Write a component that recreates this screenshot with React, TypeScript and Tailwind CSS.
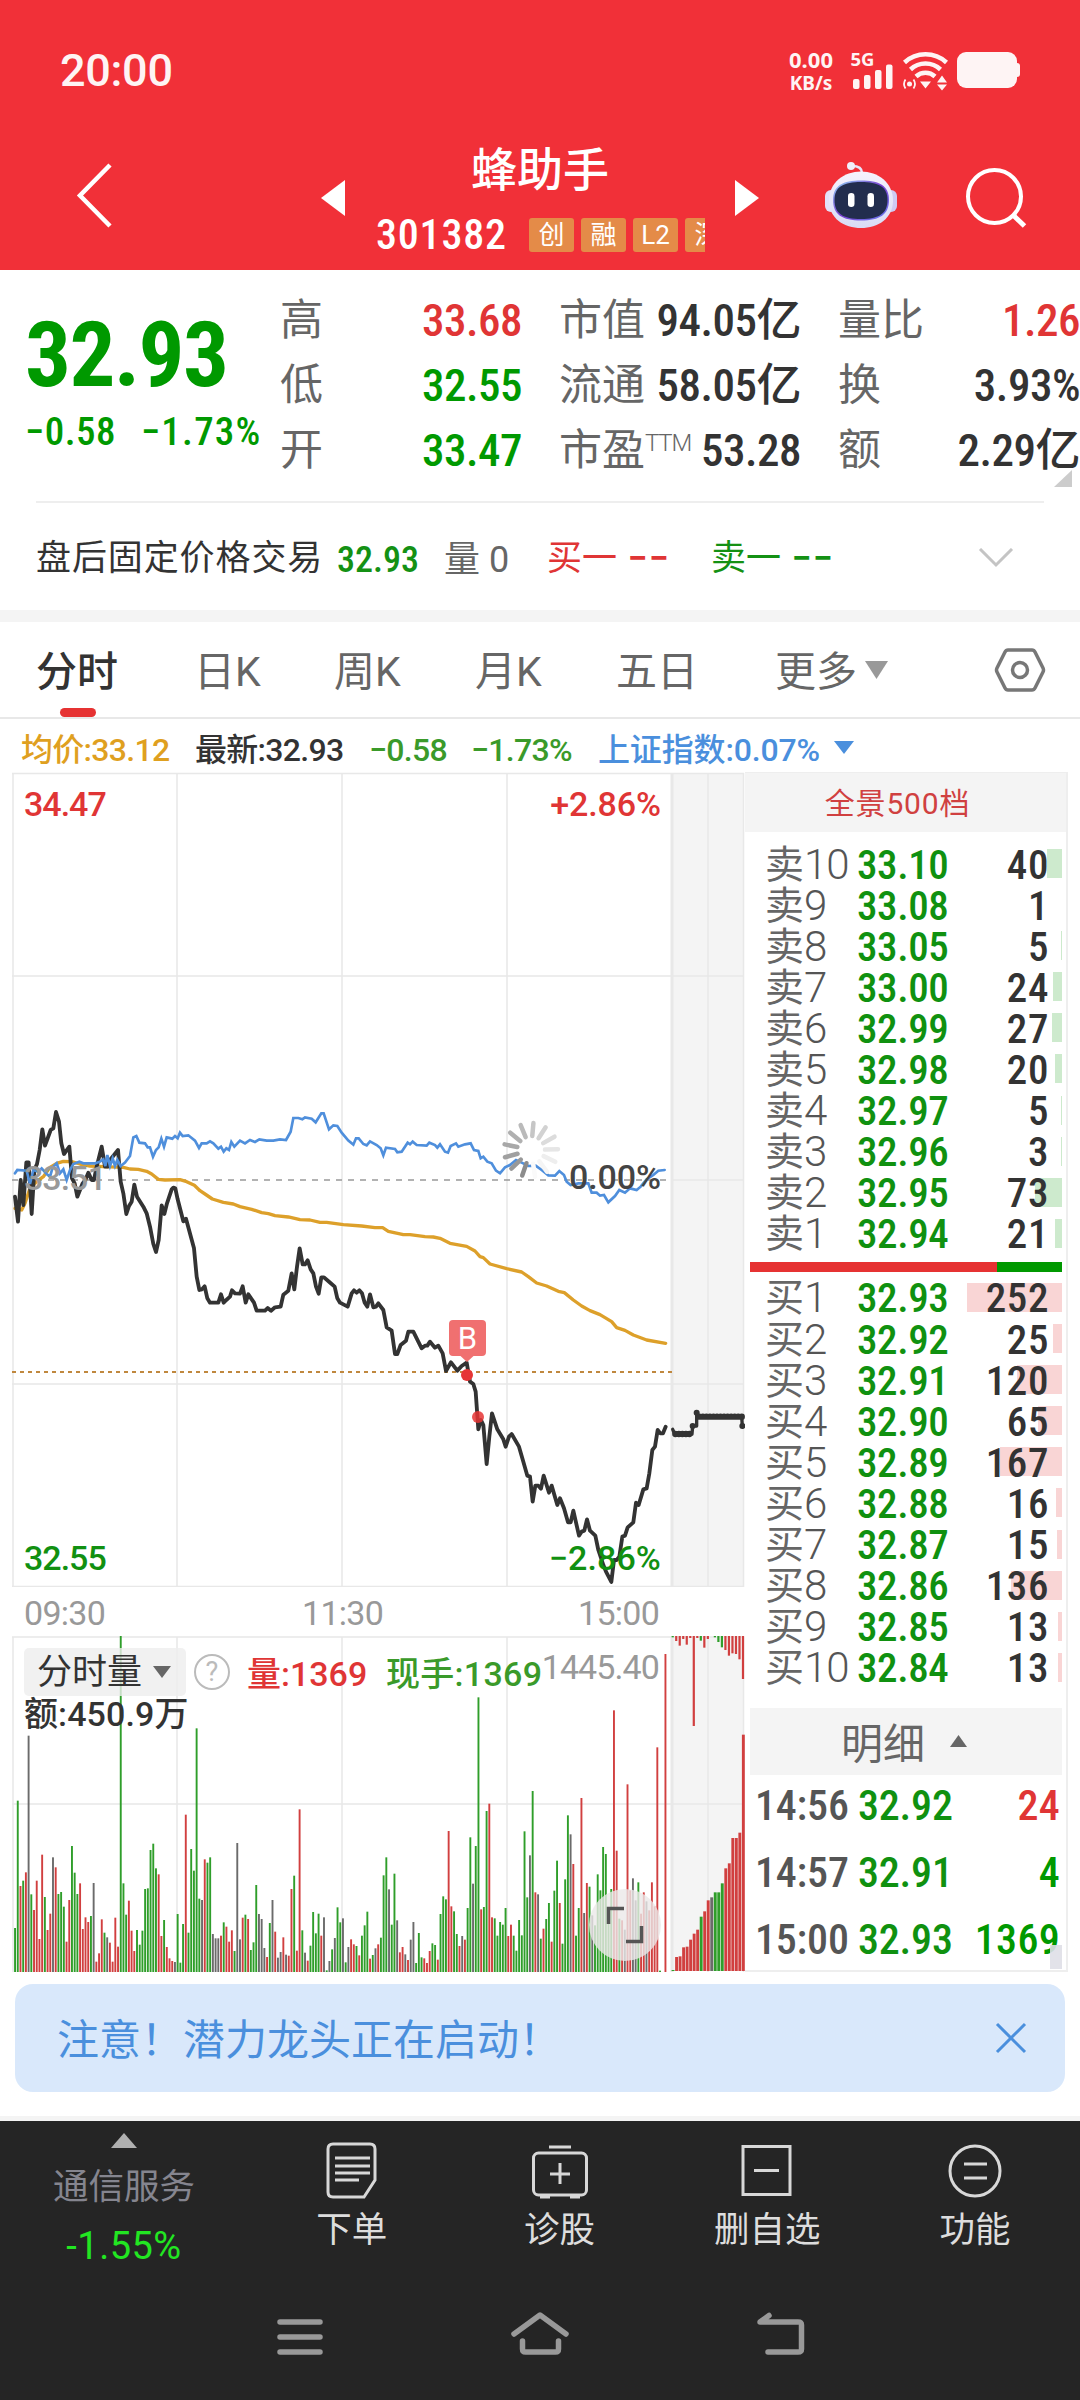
import React from "react";

type Level = { side: string; depth: number; price: string; qty: number };

const asks: Level[] = [
    { side: "卖", depth: 10, price: "33.10", qty: 40 },
    { side: "卖", depth: 9, price: "33.08", qty: 1 },
    { side: "卖", depth: 8, price: "33.05", qty: 5 },
    { side: "卖", depth: 7, price: "33.00", qty: 24 },
    { side: "卖", depth: 6, price: "32.99", qty: 27 },
    { side: "卖", depth: 5, price: "32.98", qty: 20 },
    { side: "卖", depth: 4, price: "32.97", qty: 5 },
    { side: "卖", depth: 3, price: "32.96", qty: 3 },
    { side: "卖", depth: 2, price: "32.95", qty: 73 },
    { side: "卖", depth: 1, price: "32.94", qty: 21 },
];

const bids: Level[] = [
    { side: "买", depth: 1, price: "32.93", qty: 252 },
    { side: "买", depth: 2, price: "32.92", qty: 25 },
    { side: "买", depth: 3, price: "32.91", qty: 120 },
    { side: "买", depth: 4, price: "32.90", qty: 65 },
    { side: "买", depth: 5, price: "32.89", qty: 167 },
    { side: "买", depth: 6, price: "32.88", qty: 16 },
    { side: "买", depth: 7, price: "32.87", qty: 15 },
    { side: "买", depth: 8, price: "32.86", qty: 136 },
    { side: "买", depth: 9, price: "32.85", qty: 13 },
    { side: "买", depth: 10, price: "32.84", qty: 13 },
];

const trades = [
    { time: "14:56", price: "32.92", qty: "24", color: "text-[#e03535]" },
    { time: "14:57", price: "32.91", qty: "4", color: "text-[#009900]" },
    { time: "15:00", price: "32.93", qty: "1369", color: "text-[#009900]" },
];

// Line charts are drawn on a grid of a third of a pixel
const priceLine =
    "45,350 54,425 62,300 70,375 79,247 86,247 95,402 103,270 111,252 119,210 127,148 135,197 152,150 160,145 168,96 177,125 184,190 192,222 208,200 216,295 224,310 232,350 248,310 256,300 265,278 275,300 282,300 290,260 305,200 315,260 322,260 330,240 354,210 362,305 370,340 379,402 387,378 395,365 403,314 411,350 430,380 440,400 450,440 460,492 468,516 476,480 485,376 493,402 501,370 515,328 520,323 526,325 533,358 550,424 558,416 582,505 590,590 598,630 606,628 614,619 622,655 630,668 655,668 663,643 671,668 679,660 690,650 696,631 705,640 720,641 728,619 737,668 745,643 762,668 770,692 795,692 803,684 813,692 825,682 842,680 850,644 865,632 875,580 883,628 891,560 899,505 908,553 915,553 923,541 932,568 940,580 948,620 956,641 964,592 972,592 988,606 1004,620 1012,655 1020,668 1043,680 1055,640 1062,631 1070,638 1078,631 1086,640 1094,668 1102,680 1110,643 1120,682 1128,680 1135,670 1150,690 1160,742 1175,752 1185,822 1192,822 1202,795 1218,782 1225,755 1240,755 1250,775 1265,805 1275,797 1282,797 1290,785 1305,803 1315,797 1328,820 1338,873 1353,847 1372,872 1385,858 1400,848 1410,905 1420,912 1427,935 1435,1048 1443,1020 1450,1035 1460,1152 1468,1070 1476,1000 1492,1048 1510,1078 1517,1100 1527,1070 1535,1062 1557,1100 1570,1145 1582,1187 1590,1190 1598,1265 1606,1217 1615,1217 1623,1226 1631,1187 1647,1238 1655,1217 1672,1275 1680,1255 1692,1285 1704,1327 1712,1327 1720,1292 1737,1367 1745,1355 1753,1352 1761,1318 1770,1352 1786,1367 1795,1410 1810,1455 1818,1475 1834,1506 1842,1440 1850,1440 1858,1430 1867,1370 1875,1367 1883,1342 1900,1327 1908,1268 1916,1275 1930,1228 1940,1225 1948,1180 1957,1110 1965,1100 1973,1050 1981,1060 1989,1060 1997,1040";

const averageLine =
    "45,385 65,390 75,370 90,325 110,305 130,290 150,262 170,250 190,244 215,245 240,252 270,258 310,260 370,262 390,267 415,268 440,274 455,282 475,298 495,300 540,299 560,305 583,316 600,332 615,342 637,357 670,367 700,372 720,380 755,388 785,398 805,401 825,407 865,411 900,419 930,420 960,427 980,427 1030,434 1085,438 1125,443 1148,443 1165,454 1210,464 1230,464 1275,470 1300,471 1320,475 1350,490 1400,499 1425,513 1440,530 1450,533 1470,552 1520,566 1565,576 1585,590 1610,609 1640,618 1675,634 1693,638 1720,660 1745,678 1770,692 1800,704 1835,725 1850,743 1875,751 1900,765 1940,780 1997,790";

const indexLine =
    "45,280 52,270 80,272 90,312 100,270 115,275 125,265 140,282 150,290 158,262 170,250 180,280 190,268 200,300 210,270 220,252 238,245 250,250 285,250 300,245 310,238 316,258 322,225 330,258 338,235 345,258 352,240 362,258 375,248 390,228 400,172 409,168 418,188 435,190 443,202 450,202 459,230 468,210 476,202 484,176 492,200 500,172 517,176 525,168 533,175 540,158 548,168 565,166 585,182 597,204 605,190 620,190 630,184 640,190 655,206 663,200 671,215 679,205 687,210 694,186 703,200 720,182 735,190 750,180 765,186 778,178 800,182 820,182 840,178 858,180 872,155 880,114 895,114 907,118 915,112 935,116 947,127 964,100 971,100 987,148 1000,136 1012,138 1025,158 1045,182 1060,194 1068,175 1076,175 1090,192 1100,196 1110,184 1130,195 1142,205 1150,226 1158,203 1185,207 1192,217 1205,215 1223,188 1230,193 1238,185 1250,195 1280,197 1288,188 1305,195 1312,203 1320,193 1335,215 1344,218 1352,198 1368,190 1375,200 1395,193 1412,190 1422,210 1435,213 1442,235 1450,230 1462,245 1475,250 1488,272 1500,280 1515,262 1530,255 1548,240 1565,248 1585,258 1607,257 1625,270 1645,286 1665,287 1678,273 1692,285 1700,305 1712,315 1735,310 1765,310 1775,338 1790,338 1800,347 1812,345 1825,367 1845,348 1858,330 1875,338 1890,325 1910,330 1922,320 1940,298 1960,285 1975,272 1994,270";

// One bar a minute: colour letter, then height in thirds of a pixel
const volumes =
    "g132 g514 r258 g274 r299 k709 g233 r186 r274 r99 r352 g225 r126 r175 k344 r314 g234 g240 g196 r91 r216 g378 g298 g234 r266 r129 r164 r150 g168 k267 r31 r56 r158 g118 k104 r88 r31 r163 r76 g1008 g266 g172 r214 r124 r63 g126 g82 g124 g249 g251 g366 g385 g311 r293 r108 g156 r75 r41 r33 k30 g174 g28 g144 r472 g118 g369 g304 g731 g220 k216 r338 g328 g344 k114 k101 k101 r109 g149 r136 r91 r125 g63 k387 k98 r163 g172 r159 g66 g89 g261 k174 k159 k72 r45 g147 k216 r121 k43 k60 r104 k52 r49 r249 g289 r64 r488 g125 k58 r34 g79 g180 g116 g175 r109 k164 g5 k33 g68 k102 g194 g149 k161 g29 k75 r98 r83 g78 r50 g109 g140 g181 r40 g51 k71 r83 g103 g290 g344 k248 g142 g295 k155 r59 r75 k53 r36 k97 k150 g27 g117 g44 r41 r27 r63 g86 g81 r37 g174 g227 g218 r423 r197 g182 g114 r78 k108 r97 g192 g404 k265 g378 g824 r188 g195 g483 r505 r164 g161 g109 g150 g142 g192 r108 r142 g109 g64 g156 g110 g422 g224 k350 g543 r239 k233 g100 r130 g159 g207 r91 g244 g334 r207 g85 g278 g470 k413 r324 g109 g192 r522 k177 r267 g256 k170 g140 g293 g245 g375 g354 g175 g249 r785 r364 g160 r155 k127 r563 r245 k281 k215 g269 r175 r239 k212 r185 r269 r197 r674 g4 g0 r954".split(" ");

const closingBars =
    "g3 r42 r44 r71 r73 r94 r112 r124 g163 r179 r212 k221 g236 g236 g263 r308 r323 r399 r399 r415 r709".split(" ");

const unmatchedBars =
    "g4 r15 r29 r9 r26 r6 r270 r6 g14 r35 r9 k0 g4 g18 g34 r42 r59 r52 r54 r70 r129".split(" ");

const barColor: Record<string, string> = { g: "#2f9e2a", r: "#d13f3f", k: "#6b6b6b" };

const spokes = ["#8c8c8c", "#989898", "#a0a0a0", "#a8a8a8", "#b0b0b0", "#bababa", "#c6c6c6", "#d2d2d2", "#dcdcdc", "#e6e6e6", "#eeeeee", "#f5f5f5", "#fafafa"];

const Triangle = ({ className, points }: { className: string; points: string }) => (
    <svg viewBox="0 0 10 10" preserveAspectRatio="none" className={className} fill="currentColor">
        <polygon points={points} />
    </svg>
);

function StatusBar() {
    return (
        <div className="flex h-[142px] items-center pl-[60px] pr-[60px] text-white">
            <span className="flex-1 text-[45px] font-medium tracking-[-0.300px] opacity-95">20:00</span>
            <div className="flex items-center opacity-95">
                <div className="mr-[14px] w-[50px] text-center font-['Noto_Sans'] text-[22px] font-bold leading-[24px]">
                    <p>0.00</p>
                    <p className="text-[19px]">KB/s</p>
                </div>
                <svg width="170" height="42" viewBox="850 51 170 42" className="overflow-visible" fill="#fff">
                    <text x="850.500" y="67" fontSize="18.500" fontWeight="700" fontFamily="Noto Sans">5G</text>
                    <rect x="853" y="80" width="6.500" height="10" rx="2" />
                    <rect x="864" y="76" width="6.500" height="14" rx="2" />
                    <rect x="875" y="71" width="6.500" height="19" rx="2" />
                    <rect x="886" y="65.500" width="6.500" height="24.500" rx="2" />
                    <g fill="none" stroke="#fff" strokeWidth="4.500">
                        <path d="M904.500 63.500a31 31 0 0 1 42 0" />
                        <path d="M910.500 70.500a22 22 0 0 1 30 0" />
                        <path d="M916 77.500a14 14 0 0 1 19 0" />
                        <path strokeWidth="1.800" d="M905.500 80.500q-3 4.500 0 9M913.500 80.500q3 4.500 0 9" />
                    </g>
                    <circle cx="909.500" cy="85" r="2.500" />
                    <path d="M920 82.500h11l-5.500 7zM937 83.500l5-7 5 7zM937 85.500l5 6 5-6z" />
                    <rect x="957" y="53" width="60" height="36" rx="9" />
                    <path d="M1017 64q3 0 3 3v8q0 3-3 3z" />
                </svg>
            </div>
        </div>
    );
}

function Robot() {
    return (
        <svg width="72" height="68" viewBox="825 161 72 68">
            <defs>
                <linearGradient id="rim" x1="0" y1="0" x2="1" y2="1">
                    <stop offset="0" stopColor="#8fd4f5" />
                    <stop offset="0.500" stopColor="#7a3fd0" />
                    <stop offset="1" stopColor="#6a7ff0" />
                </linearGradient>
                <linearGradient id="shell" x1="0" y1="0" x2="0" y2="1">
                    <stop offset="0" stopColor="#f6f3fd" />
                    <stop offset="1" stopColor="#d9dbf5" />
                </linearGradient>
            </defs>
            <path d="M862 173q0-7-10-7" fill="none" stroke="#e8e6fa" strokeWidth="2.500" />
            <circle cx="851" cy="166" r="4" fill="#f1effb" />
            <rect x="825" y="190" width="12" height="22" rx="6" fill="#e3e0f8" />
            <rect x="885" y="190" width="12" height="22" rx="6" fill="#cfcaf3" />
            <path d="M861 171.500c17 0 32 11 32 29s-15 27.500-32 27.500-32-9.500-32-27.500 15-29 32-29z" fill="url(#shell)" />
            <path d="M861 180.500c18 0 28 5 28 19.500s-9 20.500-28 20.500-28-6-28-20.500 10-19.500 28-19.500z" fill="url(#rim)" />
            <path d="M861 182c17 0 26.500 4.500 26.500 18s-8.500 19-26.500 19-26.500-5.500-26.500-19 9.500-18 26.500-18z" fill="#222d4e" />
            <rect x="848" y="193" width="6.500" height="14" rx="3.200" fill="#fff" />
            <rect x="867.500" y="193" width="6.500" height="14" rx="3.200" fill="#fff" />
        </svg>
    );
}

function TitleBar() {
    return (
        <div className="flex h-[128px] items-start text-white">
            <svg width="40" height="70" viewBox="0 0 40 70" className="ml-[74px] mt-[18px]" fill="none" stroke="currentColor" strokeWidth="4.5">
                <path d="M36 5L6 35.500 36 66" />
            </svg>
            <Triangle className="ml-[207px] mt-[38px] h-[36px] w-[24px]" points="0,5 10,0 10,10" />
            <div className="ml-[31px] flex w-[329px] flex-col">
                <h1 className="pr-[1px] text-center text-[46px] font-medium leading-[56px]">蜂助手</h1>
                <div className="mt-[11px] flex h-[52px] items-center gap-[7px] overflow-hidden">
                    <span className="w-[146px] shrink-0 text-[42px] font-medium leading-[50px] tracking-[0.800px] [font-stretch:75%]">301382</span>
                    {["创", "融", "L2", "深"].map((tag) => (
                        <span key={tag} className="flex h-[34px] w-[45px] shrink-0 items-center justify-center rounded-[3px] bg-[#e48b48] text-[26px] leading-none">
                            {tag}
                        </span>
                    ))}
                </div>
            </div>
            <Triangle className="ml-[30px] mt-[38px] h-[36px] w-[24px]" points="0,0 10,5 0,10" />
            <div className="ml-[66px] mt-[19px]">
                <Robot />
            </div>
            <svg width="66" height="66" viewBox="962 164 66 66" className="ml-[65px] mt-[22px]" fill="none" stroke="currentColor" strokeWidth="4">
                <circle cx="994.500" cy="196.500" r="26.500" />
                <path d="M1013 215l11.500 11" strokeWidth="5" />
            </svg>
        </div>
    );
}

function Stat({ label, sup, value, color = "text-[#333]" }: { label: string; sup?: string; value: string; color?: string }) {
    return (
        <div className="flex h-[65px] items-center justify-between whitespace-nowrap text-[43px]">
            <span className="flex text-[#666]">
                {label}
                {sup && <sup className="top-0 text-[24px] font-light leading-[50px] tracking-[-1.200px]">{sup}</sup>}
            </span>
            <span className={`text-[45px] font-medium tracking-[-0.500px] [font-stretch:75%] ${color}`}>{value}</span>
        </div>
    );
}

function Quote() {
    return (
        <section className="relative h-[231px]">
            <div className="flex pt-[18px]">
                <div className="w-[280px] pl-[25px] text-[#009900]">
                    <p className="mt-[17px] text-[91px] font-bold leading-[101px] tracking-[-1.600px] [font-stretch:75%]">32.93</p>
                    <p className="mt-[4px] flex gap-[25px] text-[39px] font-medium leading-[44px] tracking-[0.500px] [font-stretch:75%]">
                        <span>−0.58</span>
                        <span className="tracking-[1.200px]">−1.73%</span>
                    </p>
                </div>
                <div className="w-[242px]">
                    <Stat label="高" value="33.68" color="text-[#e03535]" />
                    <Stat label="低" value="32.55" color="text-[#009900]" />
                    <Stat label="开" value="33.47" color="text-[#009900]" />
                </div>
                <div className="ml-[37px] w-[242px]">
                    <Stat label="市值" value="94.05亿" />
                    <Stat label="流通" value="58.05亿" />
                    <Stat label="市盈" sup="TTM" value="53.28" />
                </div>
                <div className="ml-[37px] w-[242px]">
                    <Stat label="量比" value="1.26" color="text-[#e03535]" />
                    <Stat label="换" value="3.93%" />
                    <Stat label="额" value="2.29亿" />
                </div>
            </div>
            <Triangle className="absolute left-[1054px] top-[200px] h-[17px] w-[18px] text-[#ccc]" points="10,0 10,10 0,10" />
        </section>
    );
}

function AfterHours() {
    return (
        <section className="mx-[36px] flex h-[109px] items-center border-t-2 border-[#eee] pt-[6px] text-[35px]">
            <span className="w-[301px] tracking-[0.900px] text-[#333]">盘后固定价格交易</span>
            <span className="w-[107px] text-[36px] font-medium text-[#149114] [font-stretch:75%]">32.93</span>
            <span className="w-[103px] text-[36px] text-[#666]">量 0</span>
            <span className="flex w-[164px] gap-[11px] text-[#e03535]">买一 <b className="tracking-[1.800px]">−−</b></span>
            <span className="flex flex-1 gap-[11px] text-[#149114]">卖一 <b className="tracking-[1.800px]">−−</b></span>
            <svg width="36" height="20" viewBox="0 0 36 20" className="mb-[3px] mr-[30px]" fill="none" stroke="#c4c4c4" strokeWidth="3">
                <path d="M2 1l16 16L34 1" />
            </svg>
        </section>
    );
}

function Tabs() {
    return (
        <nav className="flex h-[97px] items-center border-b-2 border-[#e8e8e8] text-[41px] text-[#666]">
            <div className="relative ml-[36px] flex h-full w-[158px] items-center pt-[6px] font-medium text-[#333]">
                分时
                <span className="absolute bottom-0 left-[24px] h-[9px] w-[36px] rounded-full bg-[#e63232]" />
            </div>
            <span className="w-[140px] pt-[6px]">日K</span>
            <span className="w-[141px] pt-[6px]">周K</span>
            <span className="w-[141px] pt-[6px]">月K</span>
            <span className="w-[159px] pt-[6px]">五日</span>
            <span className="w-[90px] pt-[6px]">更多</span>
            <Triangle className="h-[18px] w-[23px] text-[#999]" points="0,0 10,0 5,10" />
            <svg width="52" height="48" viewBox="0 0 52 48" className="ml-[106px]" fill="none" stroke="#777" strokeWidth="3.5" strokeLinejoin="round">
                <path d="M14 4h24q2 0 3 2l8 16q1 2 0 4l-8 16q-1 2-3 2H14q-2 0-3-2L3 26q-1-2 0-4l8-16q1-2 3-2z" />
                <circle cx="26" cy="24" r="7.500" />
            </svg>
        </nav>
    );
}

function Legend() {
    return (
        <div className="flex h-[53px] items-center whitespace-nowrap pt-[8px] text-[32px] font-medium tracking-[-0.700px]">
            <span className="ml-[21px] w-[174px] text-[#dfa01f]">均价:33.12</span>
            <span className="w-[174px] text-[#333]">最新:32.93</span>
            <span className="w-[102px] text-[#3a9a2a]">−0.58</span>
            <span className="w-[127px] text-[#3a9a2a]">−1.73%</span>
            <span className="w-[236px] tracking-[-0.150px] text-[#4a8fdd]">上证指数:0.07%</span>
            <Triangle className="mb-[4px] h-[13px] w-[20px] text-[#4a8fdd]" points="0,0 10,0 5,10" />
        </div>
    );
}

// Loading wheel, darkest spoke near the bottom and fading clockwise
function Spinner() {
    return (
        <g strokeWidth="4.500" strokeLinecap="round">
            {spokes.map((shade, i) => {
                const a = (109 + (i * 360) / 13) * (Math.PI / 180);
                return (
                    <line key={i} stroke={shade} x1={531 + 14 * Math.cos(a)} y1={1150 + 14 * Math.sin(a)} x2={531 + 27 * Math.cos(a)} y2={1150 + 27 * Math.sin(a)} />
                );
            })}
        </g>
    );
}

function PriceChart() {
    const label = "absolute text-[34px] font-medium leading-[34px]";
    return (
        <div className="relative h-[815px]">
            <svg width="745" height="815" viewBox="0 772 745 815" className="block">
                <rect x="671" y="773" width="73" height="813" fill="#f4f4f4" />
                <g stroke="#e8e8e8" strokeWidth="1.500" fill="none">
                    <path d="M13 773V1587M177 773V1587M342 773V1587M507 773V1587M708 773V1587M743.500 773V1587" />
                    <path d="M12 773.500H744M12 976H744M672 1180H744M12 1384H744M12 1586.500H744" />
                    <path d="M672 773V1587" strokeWidth="3" />
                </g>
                <path d="M12 1180H666" stroke="#999" strokeWidth="1.500" strokeDasharray="6 6" />
                <path d="M12 1372H672" stroke="#c0883e" strokeWidth="2" strokeDasharray="4 4" />
                <g transform="translate(0 1080) scale(0.33333)" fill="none" strokeLinejoin="round" strokeLinecap="round">
                    <polyline points={averageLine} stroke="#dda02a" strokeWidth="10" />
                    <polyline points={priceLine} stroke="#333" strokeWidth="11.500" />
                    <polyline points={indexLine} stroke="#4f8fdc" strokeWidth="8" strokeLinejoin="miter" />
                    <polyline points="2018,1048 2024,1062 2076,1062 2078,1038 2090,1038 2090,998 2096,1010 2225,1010 2227,1038" stroke="#333" strokeWidth="10" />
                    <path d="M2026 1062H2078M2098 1010H2228" stroke="#333" strokeWidth="19" strokeDasharray="0.100 10.500" />
                    <path d="M2078 1038h.1M2090 998h.1M2227 1038h.1" stroke="#333" strokeWidth="18" />
                </g>
                <Spinner />
                <path d="M453 1320h29q4 0 4 4v28q0 4-4 4h-8.500l-6.500 6-6.500-6H453q-4 0-4-4v-28q0-4 4-4z" fill="#f07070" />
                <text x="467.500" y="1349" fontSize="31" fill="#fff" textAnchor="middle">B</text>
                <circle cx="467" cy="1375" r="6" fill="#e63535" />
                <circle cx="478" cy="1417" r="6" fill="#e63535" fillOpacity="0.850" />
            </svg>
            <span className={`${label} left-[24px] top-[15px] tracking-[-1px] text-[#e03535]`}>34.47</span>
            <span className={`${label} right-[84px] top-[15px] tracking-[-0.100px] text-[#e03535]`}>+2.86%</span>
            <span className={`${label} left-[24px] top-[389px] tracking-[-1px] text-[#999]`}>33.51</span>
            <span className={`${label} right-[84px] top-[388px] tracking-[-0.100px] text-[#444]`}>0.00%</span>
            <span className={`${label} left-[24px] top-[769px] tracking-[-1px] text-[#119011]`}>32.55</span>
            <span className={`${label} right-[84px] top-[769px] tracking-[0.100px] text-[#119011]`}>−2.86%</span>
        </div>
    );
}

function VolumeChart() {
    return (
        <div className="relative h-[336px]">
            <svg width="745" height="336" viewBox="0 1636 745 336" className="block">
                <rect x="671" y="1637" width="73" height="334" fill="#f4f4f4" />
                <g stroke="#e8e8e8" strokeWidth="1.500" fill="none">
                    <path d="M13 1637V1972M177 1637V1972M342 1637V1972M507 1637V1972M708 1637V1972M743.500 1637V1972" />
                    <path d="M12 1637H744M12 1804H744" />
                    <path d="M672 1637V1972" strokeWidth="3" />
                </g>
                {volumes.map((v, i) => {
                    const h = Number(v.slice(1)) / 3;
                    return <rect key={i} x={14.1 + i * 2.71} y={1972 - h} width="1.900" height={h} fill={barColor[v[0]]} />;
                })}
                {closingBars.map((v, i) => {
                    const h = Number(v.slice(1)) / 3;
                    return <rect key={i} x={671.6 + i * 3.515} y={1971 - h} width="2.900" height={h} fill={barColor[v[0]]} />;
                })}
                {unmatchedBars.map((v, i) => (
                    <rect key={i} x={671.6 + i * 3.515} y={1636} width="2.200" height={Number(v.slice(1)) / 3} fill={barColor[v[0]]} />
                ))}
                <circle cx="625" cy="1925" r="36" fill="#ebe8e8" fillOpacity="0.800" />
                <path d="M608.500 1924V1908.500H624M626 1941.500H641.500V1926" fill="none" stroke="#555" strokeWidth="3.500" />
            </svg>
            <div className="absolute left-[24px] top-[12px] flex h-[48px] w-[162px] items-center rounded-[5px] bg-[#eeeeee]/80 pl-[13px] pt-[3px] text-[35px] text-[#333]">
                分时量
                <Triangle className="mb-[3px] ml-[11px] h-[12px] w-[18px] text-[#666]" points="0,0 10,0 5,10" />
            </div>
            <div className="absolute left-[194px] top-[18px] flex size-[36px] items-center justify-center rounded-full border-2 border-[#bbb] text-[27px] leading-none text-[#bbb]">?</div>
            <span className="absolute left-[247px] top-[20px] text-[34px] font-medium leading-[36px] text-[#e03535]">量:1369</span>
            <span className="absolute left-[386px] top-[20px] text-[34px] font-medium leading-[36px] tracking-[0.300px] text-[#3a9a2a]">现手:1369</span>
            <span className="absolute right-[86px] top-[13px] text-[34px] leading-[36px] tracking-[-0.900px] text-[#999]">1445.40</span>
            <span className="absolute left-[24px] top-[60px] text-[34px] font-medium leading-[36px] tracking-[0.100px] text-[#333]">额:450.9万</span>
        </div>
    );
}

function LevelRow({ level, barClass }: { level: Level; barClass: string }) {
    return (
        <div className="relative flex h-[41.1px] items-center pl-[20px] pr-[17px] font-medium leading-[38px]">
            <div className={`absolute right-[4px] top-[5px] h-[29px] ${barClass}`} style={{ width: Math.floor(level.qty * 0.377) }} />
            <span className="relative flex w-[92px] whitespace-nowrap text-[39px] font-normal text-[#666]">
                {level.side}
                <span className="text-[42px] font-light tracking-[-1px] text-[#555]">{level.depth}</span>
            </span>
            <span className="relative flex-1 text-[41px] tracking-[-0.400px] text-[#109110] [font-stretch:75%]">{level.price}</span>
            <span className="relative text-[41px] tracking-[0.600px] text-[#333] [font-stretch:75%]">{level.qty}</span>
        </div>
    );
}

function OrderBook() {
    return (
        <aside className="flex h-[1200px] w-[323px] flex-col border-b-2 border-r-2 border-[#eee]">
            <div className="flex h-[60px] shrink-0 items-center justify-center border-t border-[#eee] bg-[#f4f4f4] pr-[16px] pt-[2px] text-[30px] tracking-[0.800px] text-[#d04040]">全景500档</div>
            <div className="pt-[12px]">
                {asks.map((level) => (
                    <LevelRow key={level.depth} level={level} barClass="bg-[#cdeacd]" />
                ))}
            </div>
            <div className="mb-[6px] ml-[5px] mr-[4px] mt-[7px] flex h-[10px] shrink-0 bg-[#e63232]">
                <div className="ml-auto w-[65px] bg-[#009900]" />
            </div>
            <div>
                {bids.map((level) => (
                    <LevelRow key={level.depth} level={level} barClass="bg-[#f9d5d5]" />
                ))}
            </div>
            <div className="ml-[5px] mr-[4px] mt-[19px] flex h-[67px] shrink-0 items-center bg-[#f4f4f4] pl-[91px] pt-[6px] text-[42px] text-[#666]">
                明细
                <Triangle className="mb-[6px] ml-[25px] h-[12px] w-[17px]" points="5,0 10,10 0,10" />
            </div>
            <div className="relative mt-[-4px] text-[42px] font-medium tracking-[-0.200px] text-[#109110] [font-stretch:75%]">
                {trades.map((trade) => (
                    <div key={trade.time} className="flex h-[67px] items-center pl-[10px] pr-[6px] pt-[2px]">
                        <span className="w-[103px] text-[#555]">{trade.time}</span>
                        <span className="flex-1">{trade.price}</span>
                        <span className={`tracking-[0.300px] ${trade.color}`}>{trade.qty}</span>
                    </div>
                ))}
                <span className="absolute right-[4px] top-[174px] h-[24px] w-[12px] bg-[#dfdfe7]/90" />
            </div>
        </aside>
    );
}

function Charts() {
    return (
        <div className="flex h-[1200px]">
            <div className="w-[745px]">
                <PriceChart />
                <div className="flex h-[49px] items-center pl-[24px] pt-[4px] text-[34px] tracking-[-0.700px] text-[#999]">
                    <span className="w-[278px]">09:30</span>
                    <span className="w-[276px]">11:30</span>
                    <span>15:00</span>
                </div>
                <VolumeChart />
            </div>
            <OrderBook />
        </div>
    );
}

function Banner() {
    return (
        <div className="mx-[15px] mt-[12px] flex h-[108px] items-center justify-between rounded-[18px] bg-[#d9e8fb] pl-[42px] pr-[38px] text-[42px] text-[#4a8fdd]">
            <span className="pt-[4px]">注意！潜力龙头正在启动！</span>
            <svg width="32" height="32" viewBox="0 0 32 32" fill="none" stroke="currentColor" strokeWidth="3">
                <path d="M2 2l28 28M30 2L2 30" />
            </svg>
        </div>
    );
}

const actions = [
    {
        name: "下单",
        icon: (
            <>
                <path d="M9 3h37q5 0 5 5v31L40 56H9q-5 0-5-5V8q0-5 5-5z" />
                <path d="M11 17h35M11 25h35M11 32h35M11 39h24" />
            </>
        ),
    },
    {
        name: "诊股",
        icon: (
            <>
                <rect x="1.500" y="12" width="53" height="42" rx="5" />
                <path d="M17 6h22M28 22v21M18 33h20M8 56h10M38 56h10" />
            </>
        ),
    },
    {
        name: "删自选",
        icon: (
            <>
                <rect x="4" y="5.500" width="47" height="48" />
                <path d="M15 29.500h25" />
            </>
        ),
    },
    {
        name: "功能",
        icon: (
            <>
                <circle cx="28" cy="30" r="25" />
                <path d="M17 23h23M17 37h23" />
            </>
        ),
    },
];

function Footer() {
    return (
        <footer className="h-[279px] bg-[#252525]">
            <div className="flex h-[160px]">
                <div className="flex w-[248px] flex-col items-center">
                    <Triangle className="mt-[12px] h-[15px] w-[26px] text-[#b0b0b0]" points="5,0 10,10 0,10" />
                    <span className="mt-[17px] text-[35.5px] leading-[44px] text-[#85858f]">通信服务</span>
                    <span className="mt-[15px] text-[38px] leading-[44px] tracking-[0.500px] text-[#22e622]">-1.55%</span>
                </div>
                {actions.map((action) => (
                    <div key={action.name} className="flex w-[207.7px] flex-col items-center text-[#ddd]">
                        <svg width="56" height="60" viewBox="0 0 56 60" className="mt-[20px]" fill="none" stroke="#d8d8d8" strokeWidth="3">
                            {action.icon}
                        </svg>
                        <span className="mt-[7px] text-[35.5px] leading-[44px]">{action.name}</span>
                    </div>
                ))}
            </div>
            <svg width="1080" height="119" viewBox="0 2281 1080 119" fill="none" stroke="#999" strokeWidth="5.500" strokeLinecap="round" strokeLinejoin="round">
                <path d="M280 2322h40M280 2337h40M280 2352h40" />
                <path d="M514 2334l26-19 26 19M522.500 2341v8q0 3 3 3h30q3 0 3-3v-8" />
                <path d="M768 2352h30q3.500 0 3.500-3v-24q0-3-3.500-3h-38l9-6.500" />
            </svg>
        </footer>
    );
}

export default function App() {
    return (
        <main className="flex h-[2400px] w-[1080px] flex-col overflow-hidden bg-white font-['Roboto','Noto_Sans_CJK_SC',sans-serif]">
            <header className="h-[270px] shrink-0 bg-[#f13038]">
                <StatusBar />
                <TitleBar />
            </header>
            <Quote />
            <AfterHours />
            <div className="h-[12px] bg-[#f4f4f4]" />
            <Tabs />
            <Legend />
            <Charts />
            <Banner />
            <div className="mt-[24px] h-[5px] bg-[#f4f4f4]" />
            <Footer />
        </main>
    );
}
